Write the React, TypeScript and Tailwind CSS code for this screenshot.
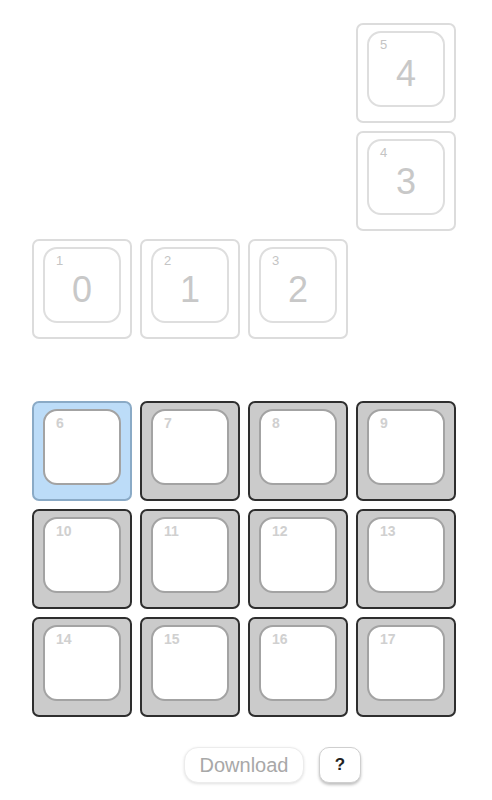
import React from "react";

type KeyProps = { label: number; digit?: string; variant: "ghost" | "pad" | "active" };

function Key({ label, digit, variant }: KeyProps) {
  const outer = {
    ghost: "bg-white border-[#dcdcdc]",
    pad: "bg-[#cbcbcb] border-[#2e2e2e]",
    active: "bg-[#bcdcf8] border-[#8aaac6]",
  }[variant];
  const inner = variant === "ghost" ? "border-[#dedede]" : "border-[#a3a3a3]";
  const labelCls =
    variant === "ghost"
      ? "text-[13px] font-normal text-[#c4c4c4]"
      : "text-[14px] font-bold text-[#d0d0d0]";

  return (
    <div className={`w-[100px] h-[100px] rounded-[7px] border-2 pt-[6px] px-[9px] pb-[14px] ${outer}`}>
      <div className={`relative h-full rounded-[14px] border-2 bg-white ${inner}`}>
        <span className={`absolute top-[4px] left-[11px] leading-4 ${labelCls}`}>{label}</span>
        {digit && (
          <div className="flex h-full items-center justify-center pt-[10px] text-[36px] leading-none text-[#c8c8c8]">
            {digit}
          </div>
        )}
      </div>
    </div>
  );
}

export default function App() {
  const pad = [6, 7, 8, 9, 10, 11, 12, 13, 14, 15, 16, 17];
  return (
    <div className="w-[492px] h-[800px] bg-white font-['Liberation_Sans',Arial,sans-serif]">
      <div className="pl-[32px] pt-[23px]">
        <div className="grid grid-cols-[repeat(4,100px)] gap-[8px]">
          <div className="col-start-4">
            <Key label={5} digit="4" variant="ghost" />
          </div>
          <div className="col-start-4">
            <Key label={4} digit="3" variant="ghost" />
          </div>
          <Key label={1} digit="0" variant="ghost" />
          <Key label={2} digit="1" variant="ghost" />
          <Key label={3} digit="2" variant="ghost" />
        </div>

        <div className="mt-[62px] grid grid-cols-[repeat(4,100px)] gap-[8px]">
          {pad.map((n) => (
            <Key key={n} label={n} variant={n === 6 ? "active" : "pad"} />
          ))}
        </div>
      </div>

      <div className="mt-[30px] flex items-center gap-[15px] pl-[184px]">
        <button className="h-[36px] w-[120px] rounded-[14px] border border-[#ececec] bg-white text-[20px] text-[#a8a8a8] shadow-[0_1px_3px_rgba(0,0,0,0.12)]">
          Download
        </button>
        <button className="h-[36px] w-[42px] rounded-[10px] border border-[#cfcfcf] bg-white text-[17px] font-bold text-[#222] shadow-[0_2px_3px_rgba(0,0,0,0.25)]">
          ?
        </button>
      </div>
    </div>
  );
}
